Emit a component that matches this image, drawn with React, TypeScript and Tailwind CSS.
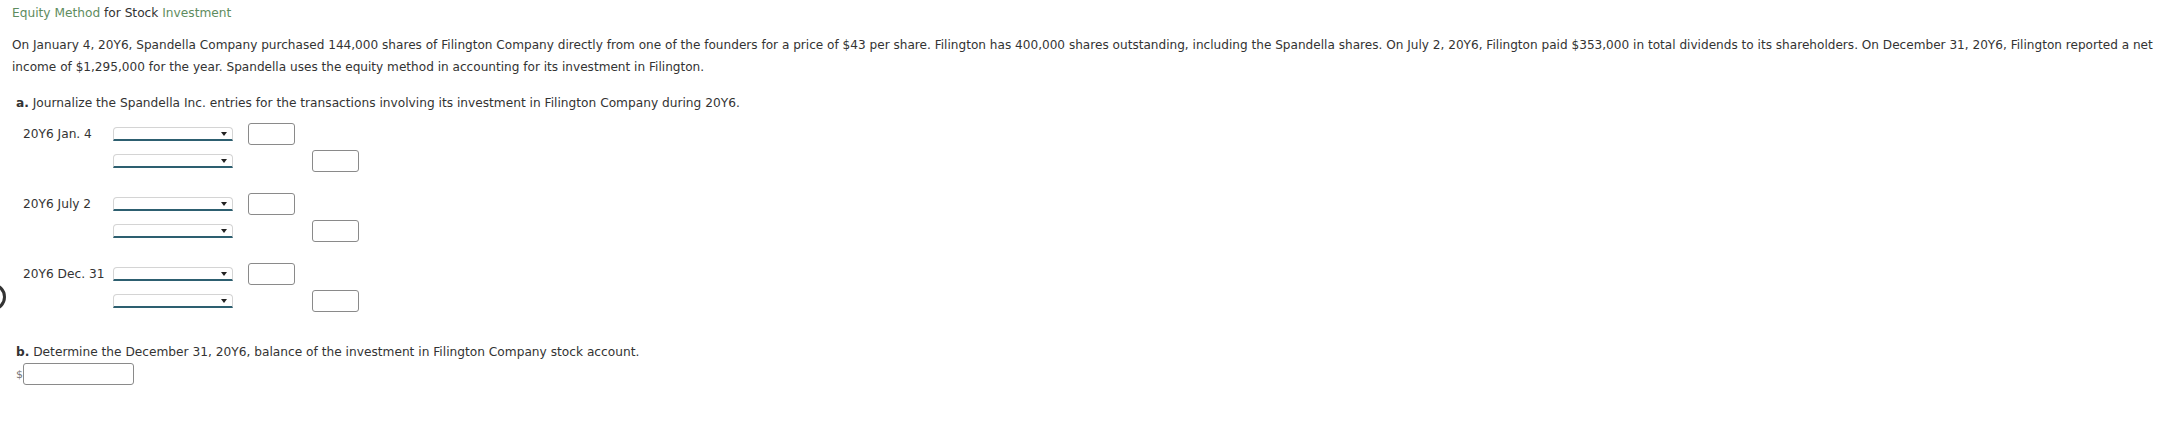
import React from "react";

function Select() {
  return (
    <div className="relative w-[120px] h-[14px] bg-white border border-[#d4d4d4] border-b-2 border-b-[#2d5f70] rounded-t-[4px]">
      <div className="absolute right-[5px] top-[4px] w-0 h-0 border-l-[3px] border-r-[3px] border-t-[4px] border-l-transparent border-r-transparent border-t-[#222]" />
    </div>
  );
}

function Input({ className = "" }: { className?: string }) {
  return <div className={"w-[47px] h-[22px] bg-white border border-[#8a8a8a] rounded-[3px] " + className} />;
}

function Block({ label }: { label: string }) {
  return (
    <div className="flex flex-col gap-[5px]">
      <div className="flex items-center h-[22px]">
        <div className="w-[101px] pl-[11px] whitespace-nowrap">{label}</div>
        <Select />
        <Input className="ml-[15px]" />
      </div>
      <div className="flex items-center h-[22px]">
        <div className="w-[101px]" />
        <Select />
        <Input className="ml-[79px]" />
      </div>
    </div>
  );
}

export default function App() {
  return (
    <div
      className="relative w-full min-h-[427px] bg-white text-[#333] text-[12.2px] pl-[12px] pr-[6px] pt-[5px] overflow-hidden"
      style={{ fontFamily: '"DejaVu Sans", Verdana, sans-serif' }}
    >
      <div className="leading-[16px]">
        <span className="text-[#5e8c5e]">Equity Method</span> for Stock{" "}
        <span className="text-[#5e8c5e]">Investment</span>
      </div>
      <p className="mt-[13px] leading-[22px] text-[12.1px]">
        On January 4, 20Y6, Spandella Company purchased 144,000 shares of Filington Company directly from one of the
        founders for a price of $43 per share. Filington has 400,000 shares outstanding, including the Spandella
        shares. On July 2, 20Y6, Filington paid $353,000 in total dividends to its shareholders. On December 31, 20Y6,
        Filington reported a net income of $1,295,000 for the year. Spandella uses the equity method in accounting for
        its investment in Filington.
      </p>
      <div className="mt-[17px] leading-[16px] pl-[4px]">
        <span className="font-bold">a.</span> Journalize the Spandella Inc. entries for the transactions involving its
        investment in Filington Company during 20Y6.
      </div>
      <div className="mt-[12px] flex flex-col gap-[21px]">
        <Block label="20Y6 Jan. 4" />
        <Block label="20Y6 July 2" />
        <Block label="20Y6 Dec. 31" />
      </div>
      <div className="mt-[32px] leading-[16px] pl-[4px]">
        <span className="font-bold">b.</span> Determine the December 31, 20Y6, balance of the investment in Filington
        Company stock account.
      </div>
      <div className="mt-[3px] flex items-center pl-[4px]">
        <span className="text-[#777] text-[11px] leading-[21px]">$</span>
        <div className="w-[111px] h-[22px] bg-white border border-[#8a8a8a] rounded-[3px]" />
      </div>
      <div className="absolute left-[-22px] top-[283px] w-[28px] h-[28px] rounded-full border-[3px] border-[#333]" />
    </div>
  );
}
